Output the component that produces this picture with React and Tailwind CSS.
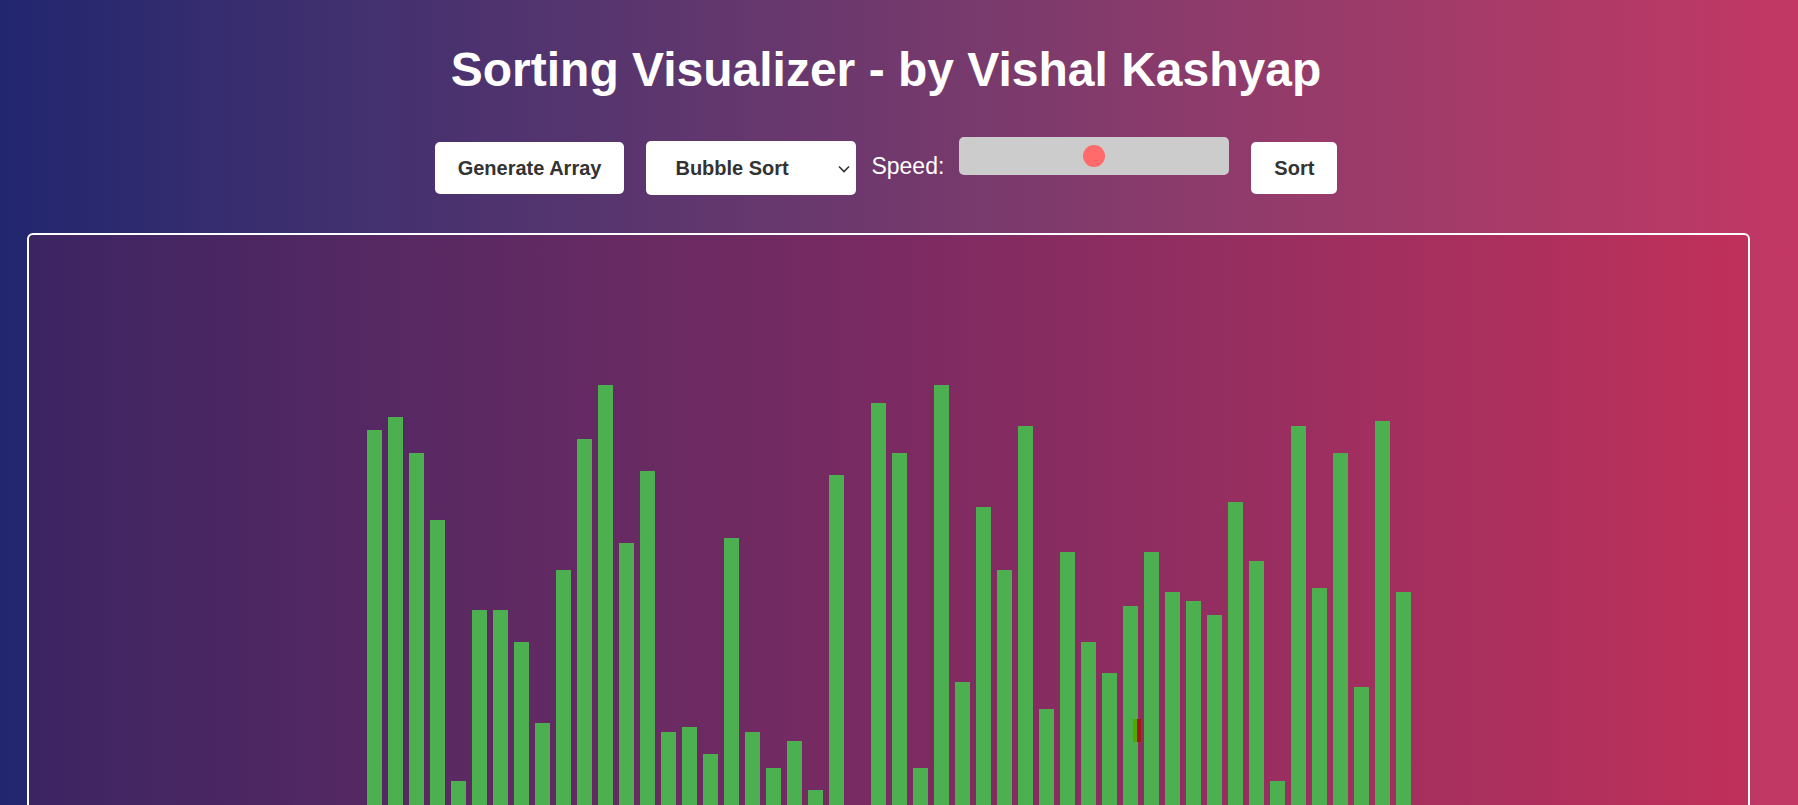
import React, { useState } from 'react';

// bar heights in px, read off the current array state
const BARS = [
  411, 424, 388, 321, 60, 231, 231, 199, 118, 271,
  402, 456, 298, 370, 109, 114, 87, 303, 109, 73,
  100, 51, 366, 20, 438, 388, 73, 456, 159, 334,
  271, 415, 132, 289, 199, 168, 235, 289, 249, 240,
  226, 339, 280, 60, 415, 253, 388, 154, 420, 249,
];

const Button = ({ children }) => (
  <button className="mt-[5px] flex h-[52px] items-center justify-center rounded-[5px] bg-white px-[23px] text-[20px] font-bold text-[#333]">
    {children}
  </button>
);

const App = () => {
  const [algo, setAlgo] = useState('bubble');

  return (
    <div className="h-[805px] overflow-hidden bg-linear-to-r from-[#21266f] to-[#c33764] font-['Liberation_Sans',Arial,sans-serif]">
      <div className="w-[1777px]">
        <div className="w-[1772px]">
          <h1 className="pt-[46px] text-center text-5xl leading-none font-bold text-white">
            Sorting Visualizer - by Vishal Kashyap
          </h1>

          {/* Controls */}
          <div className="mt-[43px] flex items-start justify-center">
            <Button>Generate Array</Button>

            <div className="relative ml-[22px] mt-[4px]">
              <select
                value={algo}
                onChange={(e) => setAlgo(e.target.value)}
                className="h-[54px] w-[210px] appearance-none rounded-[5px] bg-white pl-[29px] text-[20px] font-bold text-[#333] outline-none"
              >
                <option value="bubble">Bubble Sort</option>
                <option value="selection">Selection Sort</option>
                <option value="insertion">Insertion Sort</option>
                <option value="merge">Merge Sort</option>
                <option value="quick">Quick Sort</option>
              </select>
              <svg className="pointer-events-none absolute top-[24px] right-[6px]" width="12" height="8" viewBox="0 0 12 8">
                <path d="M1 1.5 L6 6.5 L11 1.5" fill="none" stroke="#333" strokeWidth="1.6" />
              </svg>
            </div>

            <span className="ml-[15px] mt-[18px] text-[23px] leading-[23px] text-white">Speed:</span>

            {/* Speed slider */}
            <div className="ml-[15px] flex h-[38px] w-[270px] items-center justify-center rounded-[5px] bg-[#cccccc]">
              <div className="h-[22px] w-[22px] rounded-full bg-[#ff6b6b]" />
            </div>

            <div className="ml-[22px]">
              <Button>Sort</Button>
            </div>
          </div>
        </div>

        {/* Bars */}
        <div className="relative mx-[27px] mt-[38px] h-[610px] rounded-md border-2 border-white bg-linear-to-r from-[#3c2462] via-[#7b2a62] to-[#c0305a]">
          <div className="flex h-full items-end justify-center">
            {BARS.map((h, i) => (
              <div key={i} className="mx-[3px] w-[15px] bg-[#4caf50]" style={{ height: h }} />
            ))}
          </div>
          <div className="absolute top-[484px] left-[1104px] flex h-[23px]">
            <div className="w-[4px] bg-[#52a800]" />
            <div className="w-[4px] bg-[#a01c10]" />
          </div>
        </div>
      </div>
    </div>
  );
};

export default App;
